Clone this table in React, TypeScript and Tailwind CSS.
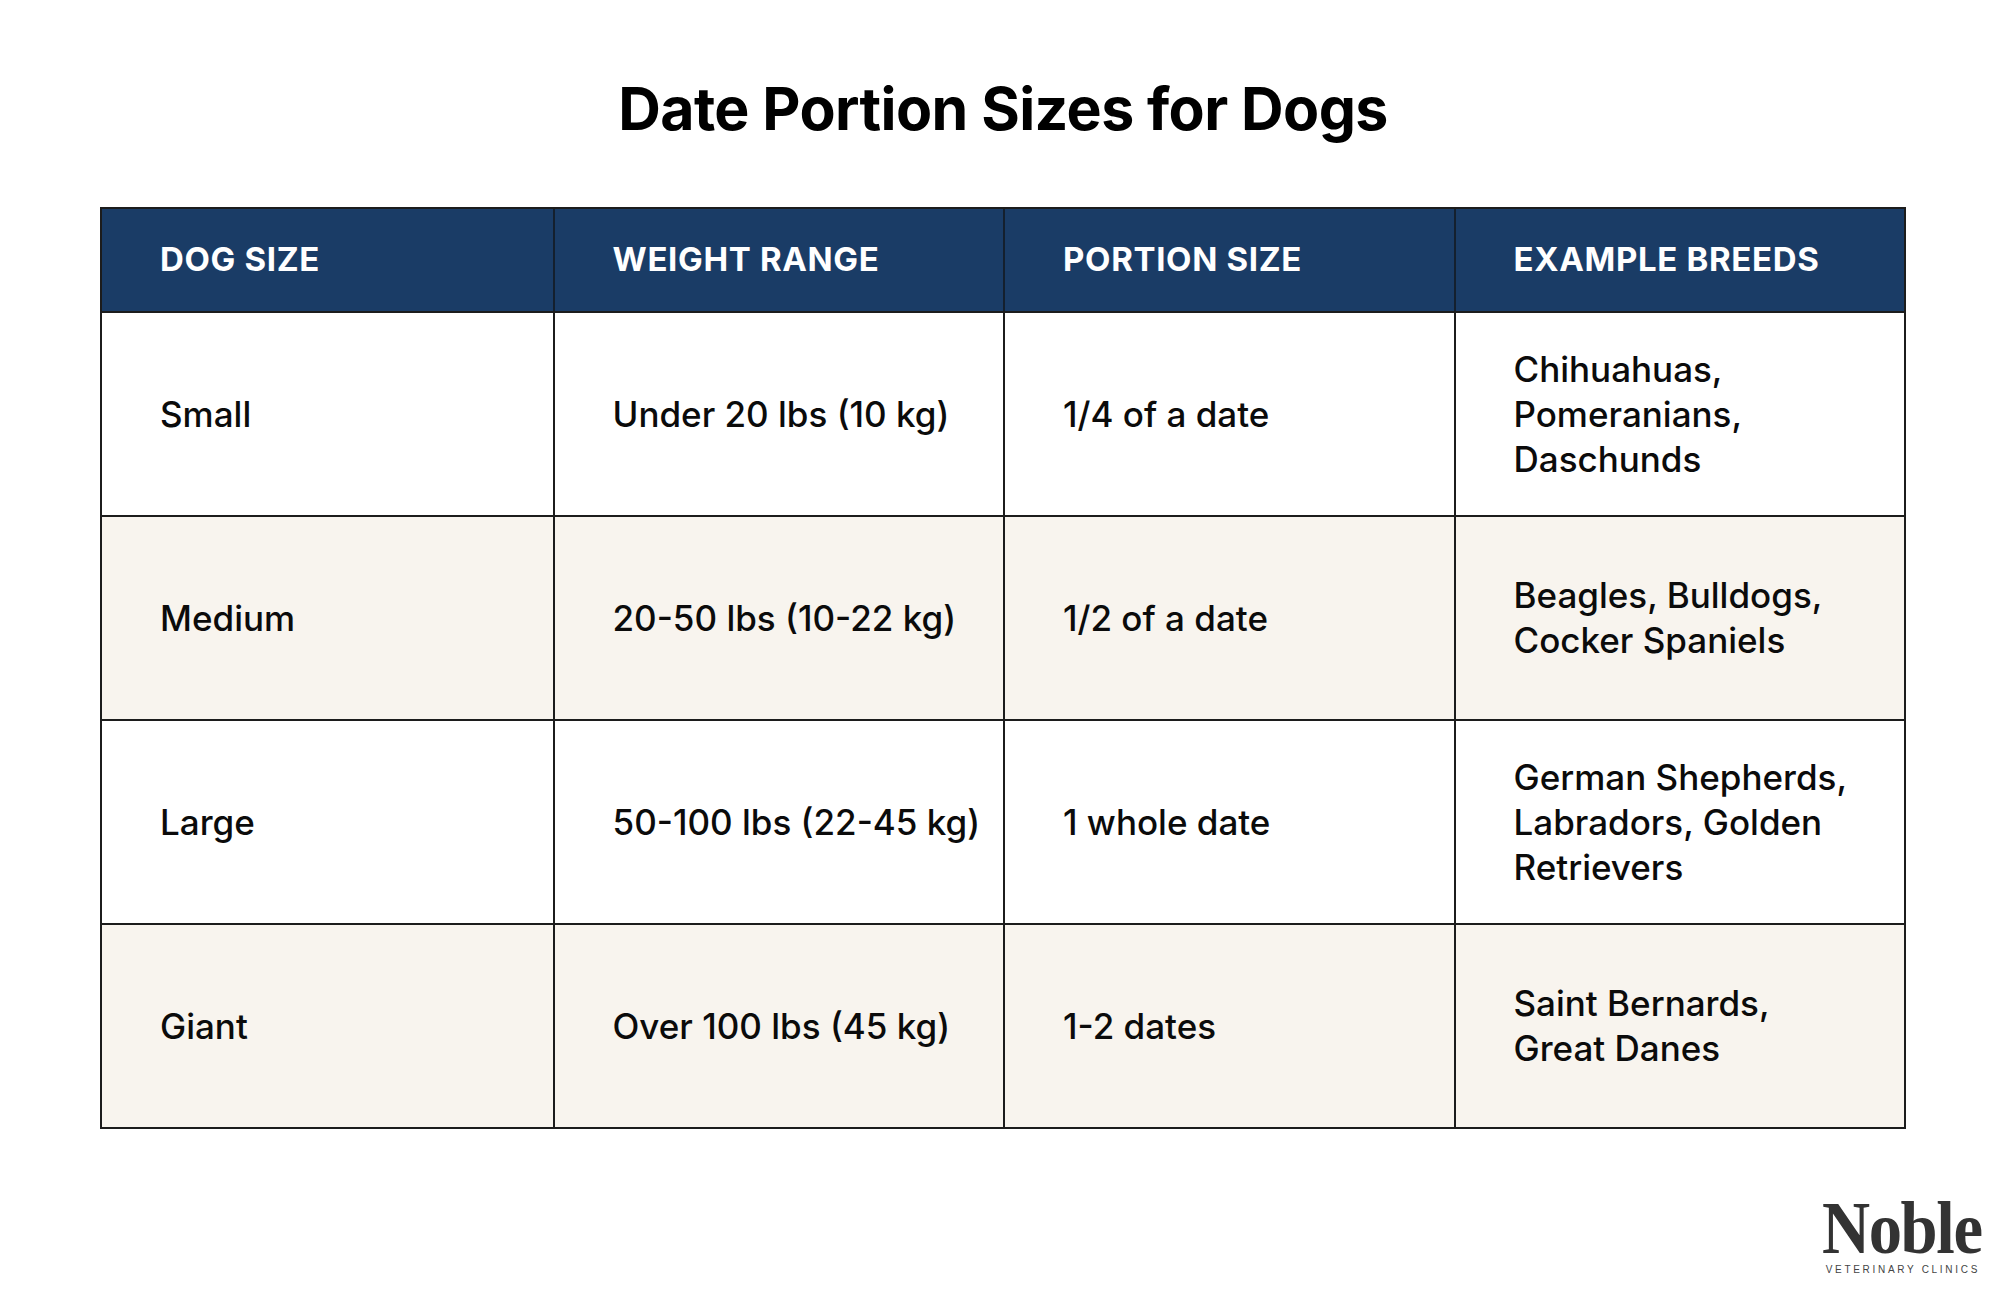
import React from "react";

const rows: { size: string; weight: string; portion: string; breeds: string[] }[] = [
  { size: "Small", weight: "Under 20 lbs (10 kg)", portion: "1/4 of a date", breeds: ["Chihuahuas,", "Pomeranians,", "Daschunds"] },
  { size: "Medium", weight: "20-50 lbs (10-22 kg)", portion: "1/2 of a date", breeds: ["Beagles, Bulldogs,", "Cocker Spaniels"] },
  { size: "Large", weight: "50-100 lbs (22-45 kg)", portion: "1 whole date", breeds: ["German Shepherds,", "Labradors, Golden", "Retrievers"] },
  { size: "Giant", weight: "Over 100 lbs (45 kg)", portion: "1-2 dates", breeds: ["Saint Bernards,", "Great Danes"] },
];

const headers = ["DOG SIZE", "WEIGHT RANGE", "PORTION SIZE", "EXAMPLE BREEDS"];

export default function App() {
  return (
    <div
      className="w-[2006px] h-[1299px] bg-white overflow-hidden flex flex-col text-[#0b0b0b]"
      style={{ fontFamily: "Inter, 'Noto Sans', sans-serif" }}
    >
      <h1 className="pt-[79px] text-center text-[59px] leading-[59px] font-bold tracking-[-0.01em] text-black">
        Date Portion Sizes for Dogs
      </h1>

      <div className="mx-[100px] mt-[69px] border-2 border-[#1c1c1c]">
        <div className="grid grid-cols-4 h-[102px] bg-[#1a3c66]">
          {headers.map((h, i) => (
            <div
              key={h}
              className={`flex items-center pl-[58px] text-white text-[33px] font-bold tracking-[0.02em] whitespace-nowrap ${
                i > 0 ? "border-l-2 border-[#14202e]" : ""
              }`}
            >
              {h}
            </div>
          ))}
        </div>
        {rows.map((r, idx) => (
          <div
            key={r.size}
            className={`grid grid-cols-4 h-[204px] border-t-2 border-[#1c1c1c] ${
              idx % 2 === 1 ? "bg-[#f8f4ee]" : "bg-white"
            }`}
          >
            <div className="flex items-center pl-[58px] text-[35px] font-medium">{r.size}</div>
            <div className="flex items-center pl-[58px] text-[35px] font-medium border-l-2 border-[#1c1c1c] whitespace-nowrap">
              {r.weight}
            </div>
            <div className="flex items-center pl-[58px] text-[35px] font-medium border-l-2 border-[#1c1c1c]">
              {r.portion}
            </div>
            <div className="flex items-center pl-[58px] border-l-2 border-[#1c1c1c]">
              <p className="text-[35px] leading-[45px] font-medium whitespace-nowrap">
                {r.breeds.map((b, i) => (
                  <React.Fragment key={b}>
                    {i > 0 && <br />}
                    {b}
                  </React.Fragment>
                ))}
              </p>
            </div>
          </div>
        ))}
      </div>

      <div className="flex justify-end pr-[26px] mt-[62px]">
        <div className="w-[157px] flex flex-col items-center text-[#333333]">
          <span
            className="text-[74px] leading-[74px] font-bold whitespace-nowrap scale-x-[0.9] tracking-[-0.02em]"
            style={{ fontFamily: "'Liberation Serif', 'DejaVu Serif', serif" }}
          >
            Noble
          </span>
          <span
            className="text-[10px] leading-[10px] tracking-[0.27em] whitespace-nowrap text-[#444444] mr-[-0.27em]"
            style={{ fontFamily: "'Liberation Sans', Arial, sans-serif" }}
          >
            VETERINARY CLINICS
          </span>
        </div>
      </div>
    </div>
  );
}
